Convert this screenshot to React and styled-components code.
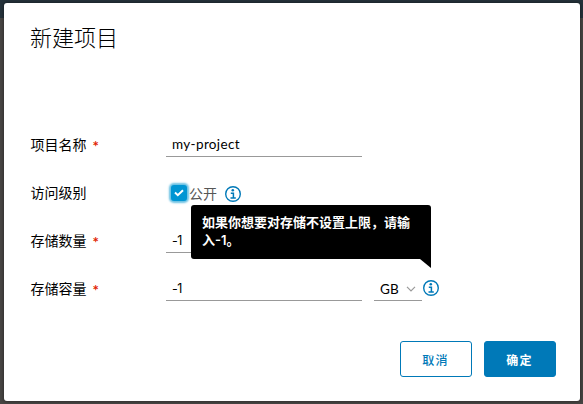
import React from "react";
import styled, { createGlobalStyle } from "styled-components";

const GlobalStyle = createGlobalStyle`
  * { box-sizing: border-box; }
  body { margin: 0; overflow: hidden; }
`;

const Backdrop = styled.div`
  width: 583px;
  height: 404px;
  padding: 3px 3px 3px 4px;
  background: linear-gradient(#25323b 0 18px, #474543 18px);
  font-family: Inter, "Noto Sans CJK SC", sans-serif;
  color: #000;
`;

const Dialog = styled.section`
  display: flex;
  flex-direction: column;
  width: 576px;
  height: 398px;
  padding: 0 24px 24px 26px;
  background: #fff;
  border-radius: 3px;
  box-shadow: 0 0 3px 1px rgba(0, 0, 0, 0.3);
`;

const Title = styled.h3`
  height: 118px;
  margin: 0;
  padding-top: 18px;
  font-family: "Noto Sans CJK SC", sans-serif;
  font-size: 22px;
  font-weight: 300;
  line-height: 30px;
`;

const Row = styled.div`
  display: flex;
  align-items: center;
  height: 48px;
`;

const Label = styled.label`
  display: flex;
  width: 136px;
  padding-left: 0.5px;
  font-size: 14px;
  line-height: 24px;
`;

const Required = styled.span`
  margin-left: 6px;
  padding-top: 1px;
  color: #e12200;
  font-family: Lato, sans-serif;
  font-size: 15px;
  font-weight: 700;
`;

const Field = styled.div`
  display: flex;
  align-items: center;
  justify-content: space-between;
  width: ${(p) => p.$width}px;
  height: 24px;
  padding: 0 6px;
  border-bottom: 1px solid #999;
  font-size: 12.5px;
  letter-spacing: -0.6px;
`;

const TextField = styled(Field)`
  padding-bottom: 1px;
  font-family: Lato, sans-serif;
  font-size: 13.5px;
  letter-spacing: 0.35px;
`;

const UnitSelect = styled(TextField)`
  margin-left: 12px;
  padding-bottom: 0;
  letter-spacing: 0.2px;
`;

const Checkbox = styled.span`
  display: flex;
  align-items: center;
  justify-content: center;
  width: 16px;
  height: 16px;
  margin-left: 5px;
  border-radius: 3px;
  background: #0095d3;
  box-shadow: 0 0 2px 2px #6bc1e3;
`;

const CheckLabel = styled.span`
  margin: 2px 8px 0 2px;
  color: #565656;
  font-size: 14px;
  line-height: 20px;
`;

const InfoAnchor = styled.span`
  position: relative;
  display: flex;
  margin-top: ${(p) => p.$drop || 0}px;
  margin-left: ${(p) => p.$gap || 0}px;
`;

const Tooltip = styled.div`
  position: absolute;
  right: 8px;
  bottom: 37px;
  width: 240px;
  height: 54px;
  padding: 8px 12px 8px 11px;
  border-radius: 3px 3px 0 3px;
  background: #000;
  color: #fff;
  font-size: 13px;
  font-weight: 600;
  line-height: 18px;

  &::after {
    content: "";
    position: absolute;
    top: 100%;
    right: 0;
    border-top: 9px solid #000;
    border-left: 11px solid transparent;
  }
`;

const Footer = styled.footer`
  display: flex;
  justify-content: flex-end;
  gap: 12px;
  margin-top: auto;
`;

const Button = styled.button`
  width: 72px;
  height: 36px;
  padding: 0 1px 0 0;
  border: 1px solid #0079b8;
  border-radius: 3px;
  background: ${(p) => (p.$primary ? "#0079b8" : "#fff")};
  color: ${(p) => (p.$primary ? "#fff" : "#0079b8")};
  font-family: "Noto Sans CJK SC", sans-serif;
  font-size: 12px;
  font-weight: ${(p) => (p.$primary ? 700 : 500)};
  letter-spacing: 1.3px;
`;

const InfoIcon = () => (
  <svg width="16" height="16" viewBox="0 0 16 16" fill="none" stroke="#0079b8">
    <circle cx="8" cy="8" r="7.3" strokeWidth="1.4" />
    <circle cx="7.8" cy="4.3" r="1.3" fill="#0079b8" stroke="none" />
    <path d="M5.8 7.2H8.4V12M5.5 12H10.8" strokeWidth="1.5" />
  </svg>
);

const Tick = () => (
  <svg width="10" height="8" viewBox="0 0 10 8" fill="none">
    <path d="M1 3.6 3.8 6.2 9 1.2" stroke="#fff" strokeWidth="2" />
  </svg>
);

const Chevron = () => (
  <svg width="10" height="6" viewBox="0 0 10 6" fill="none">
    <path d="M1 0.8 5 4.8 9 0.8" stroke="#9a9a9a" strokeWidth="1.2" />
  </svg>
);

const FormRow = ({ label, required, children }) => (
  <Row>
    <Label>
      {label}
      {required && <Required>*</Required>}
    </Label>
    {children}
  </Row>
);

export default function App() {
  return (
    <Backdrop>
      <GlobalStyle />
      <Dialog>
        <Title>新建项目</Title>
        <FormRow label="项目名称" required>
          <TextField $width={196}>my-project</TextField>
        </FormRow>
        <FormRow label="访问级别">
          <Checkbox><Tick /></Checkbox>
          <CheckLabel>公开</CheckLabel>
          <InfoAnchor $drop={2}><InfoIcon /></InfoAnchor>
        </FormRow>
        <FormRow label="存储数量" required>
          <Field $width={196}>-1</Field>
        </FormRow>
        <FormRow label="存储容量" required>
          <Field $width={196}>-1</Field>
          <UnitSelect $width={48}>GB<Chevron /></UnitSelect>
          <InfoAnchor $gap={1} $drop={-2}>
            <InfoIcon />
            <Tooltip>如果你想要对存储不设置上限，请输入-1。</Tooltip>
          </InfoAnchor>
        </FormRow>
        <Footer>
          <Button>取消</Button>
          <Button $primary>确定</Button>
        </Footer>
      </Dialog>
    </Backdrop>
  );
}
